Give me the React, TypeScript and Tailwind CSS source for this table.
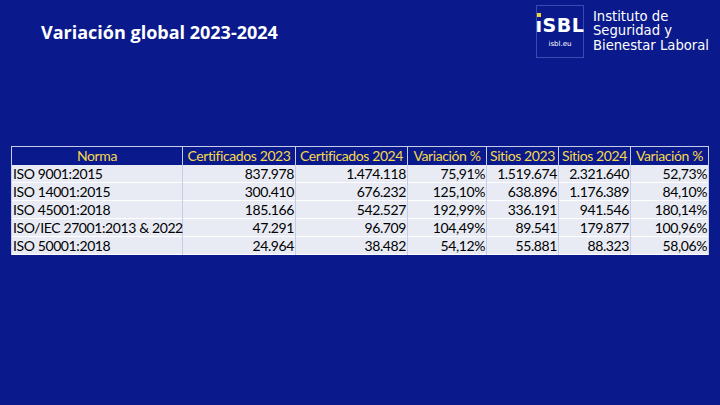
import React from 'react';

const rows = [
  ['ISO 9001:2015', '837.978', '1.474.118', '75,91%', '1.519.674', '2.321.640', '52,73%'],
  ['ISO 14001:2015', '300.410', '676.232', '125,10%', '638.896', '1.176.389', '84,10%'],
  ['ISO 45001:2018', '185.166', '542.527', '192,99%', '336.191', '941.546', '180,14%'],
  ['ISO/IEC 27001:2013 & 2022', '47.291', '96.709', '104,49%', '89.541', '179.877', '100,96%'],
  ['ISO 50001:2018', '24.964', '38.482', '54,12%', '55.881', '88.323', '58,06%']
];

const headers = ['Norma', 'Certificados 2023', 'Certificados 2024', 'Variación %', 'Sitios 2023', 'Sitios 2024', 'Variación %'];
const widths = ['w-[171px]', 'w-[113px]', 'w-[112px]', 'w-[79px]', 'w-[72px]', 'w-[72px]', 'w-[78px]'];

function Logo() {
  return (
    <div className="flex items-center gap-[9px]">
      <div className="w-[48px] h-[53px] border border-[#3a4bb0] flex flex-col items-center justify-center">
        <div className="relative text-white font-bold text-[19px] leading-none tracking-[0.5px] [font-family:'DejaVu_Sans',sans-serif]">
          <span className="relative">
            ı
            <span className="absolute left-[1px] top-[-1px] w-[4px] h-[4px] bg-[#f2d43a]" />
          </span>
          SBL
        </div>
        <div className="text-white text-[7px] mt-[6px] leading-none [font-family:'DejaVu_Sans',sans-serif]">isbl.eu</div>
      </div>
      <div className="text-white text-[13.2px] leading-[14.5px] [font-family:'DejaVu_Sans',sans-serif]">
        <div>Instituto de</div>
        <div>Seguridad y</div>
        <div>Bienestar Laboral</div>
      </div>
    </div>
  );
}

export default function App() {
  return (
    <div className="w-[720px] h-[405px] bg-[#0a1a8c] flex flex-col overflow-hidden">
      <div className="flex justify-between items-start pl-[41px] pr-[11px] pt-[5px]">
        <h1 className="text-white font-bold text-[18px] mt-[14px] [font-family:'Open_Sans',sans-serif]">
          Variación global 2023-2024
        </h1>
        <Logo />
      </div>
      <div className="pl-[11px] mt-[88px]">
        <table className="w-[697px] table-fixed border-collapse border border-[#c8cde6] text-[14px] leading-[17px] tracking-[-0.4px] [font-family:Lato,sans-serif]">
          <thead>
            <tr className="h-[18px]">
              {headers.map((h, i) =>
              <th
                key={i}
                className={`${widths[i]} p-0 px-[1px] font-normal text-[#f5d84a] text-center whitespace-nowrap overflow-hidden border-x border-[#c8cde6] bg-[#0a1a8c]`}>
                  {h}
                </th>
              )}
            </tr>
          </thead>
          <tbody>
            {rows.map((r, ri) =>
            <tr key={ri} className="h-[18px] bg-[#e8ebf4] border-b border-white">
                {r.map((c, ci) =>
              <td
                key={ci}
                className={`p-0 px-[1px] text-black whitespace-nowrap border-x border-[#c8cde6] ${ci === 0 ? 'text-left' : 'text-right'}`}>
                    {c}
                  </td>
              )}
              </tr>
            )}
          </tbody>
        </table>
      </div>
    </div>
  );
}
